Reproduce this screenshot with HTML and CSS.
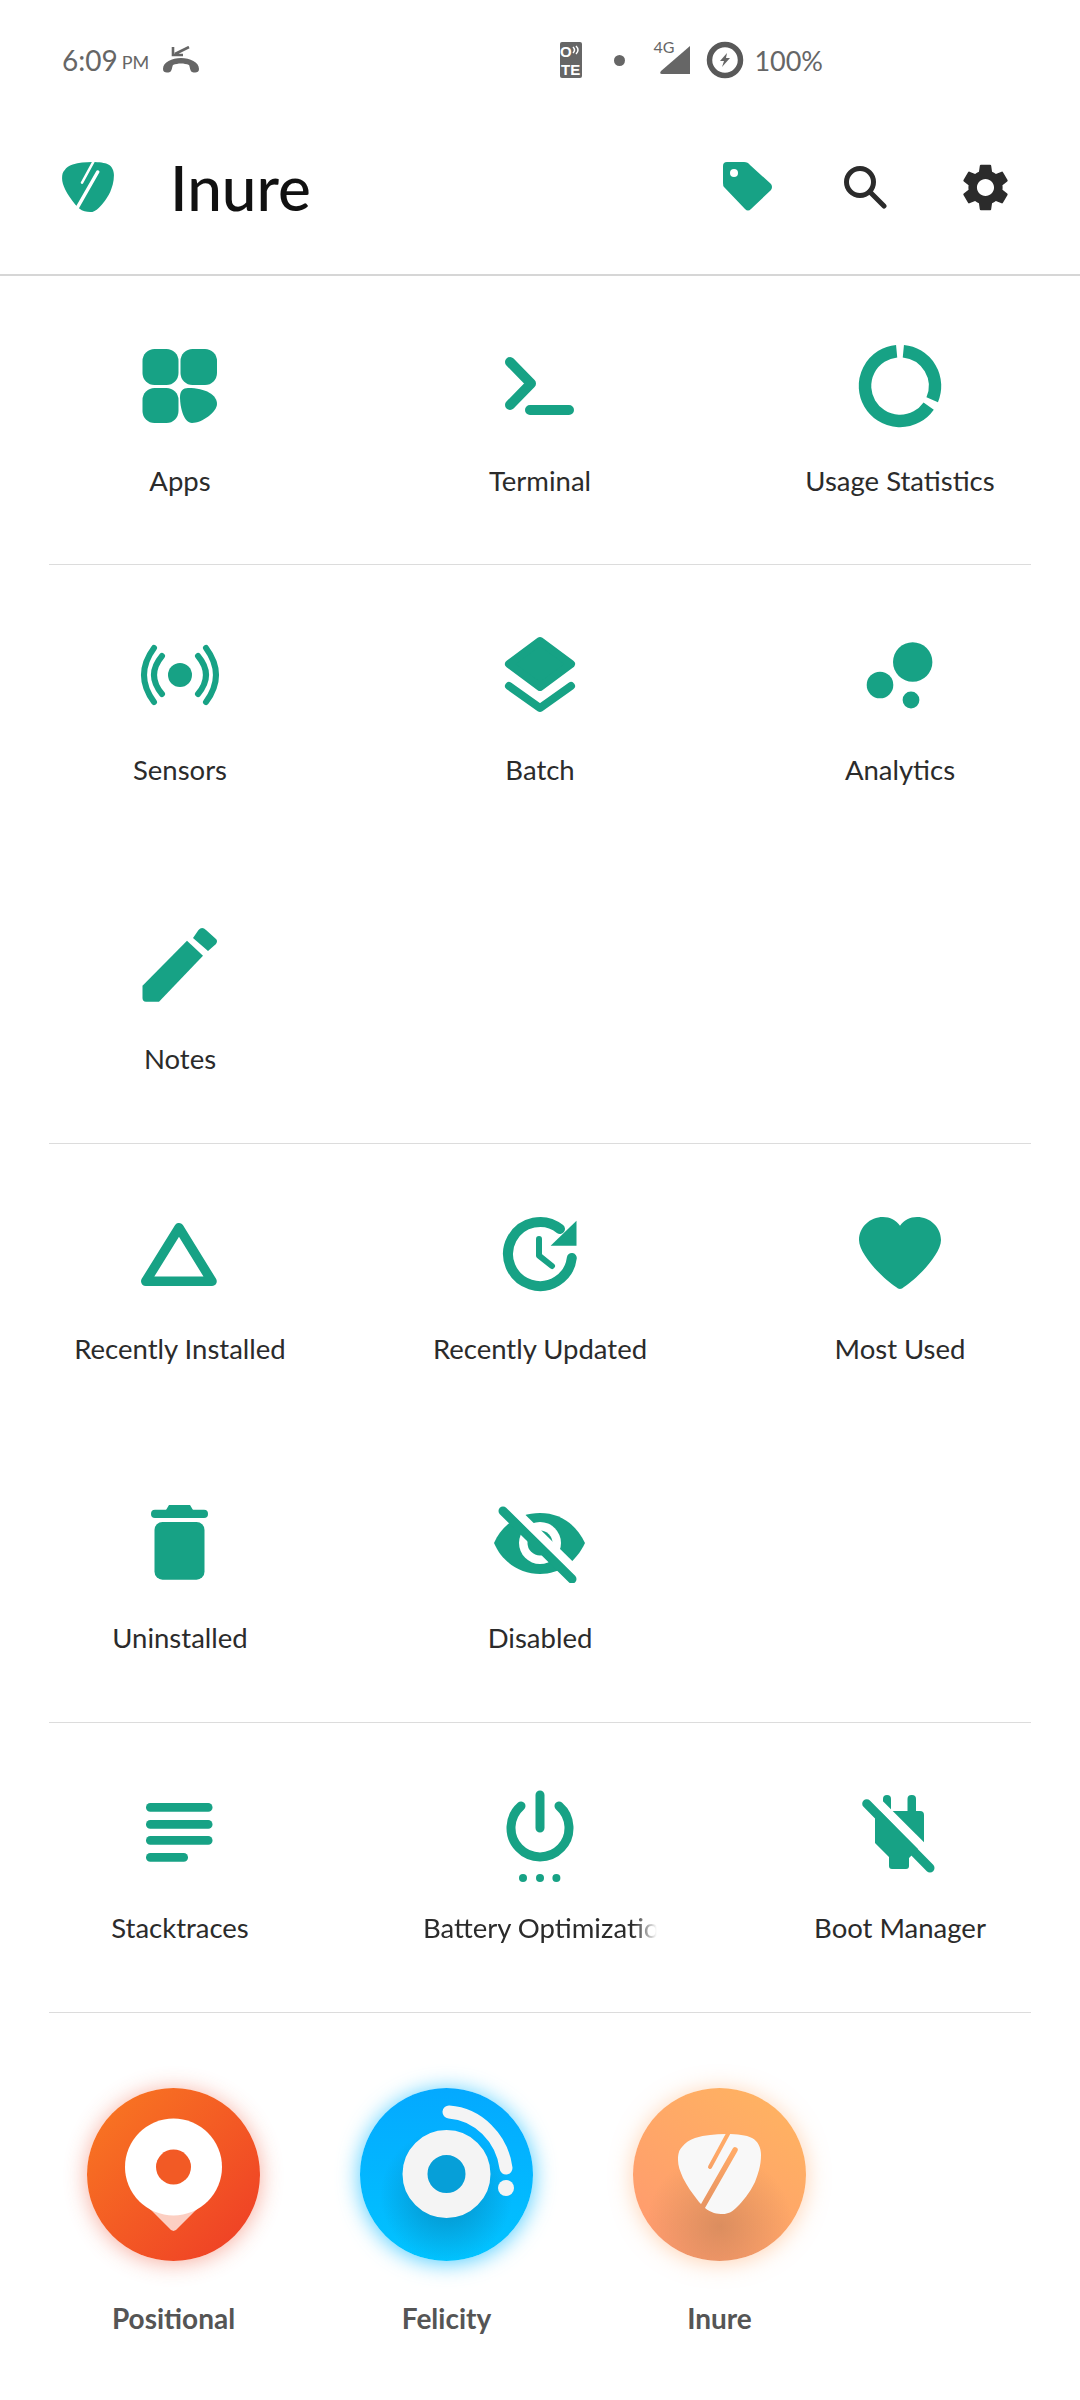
FILE: index.html
```html
<!DOCTYPE html>
<html lang="en">
  <head>
    <meta charset="UTF-8" />
    <meta name="viewport" content="width=device-width, initial-scale=1.0" />
    <title>Inure</title>
    <link rel="stylesheet" href="styles.css">
  </head>
  <body>
    <div class="status-bar">
      <div class="status-left">
        <span class="time">6:09</span><span class="ampm">PM</span>
        <svg class="call-icon" viewBox="0 0 38 28" width="38" height="28">
          <path d="M1 23 C1 16 10 12 19 12 C28 12 37 16 37 23 C37 27 33 27 30 26 C28 25 28 21 27 19 C22 17 16 17 11 19 C10 21 10 25 8 26 C5 27 1 27 1 23 Z" />
          <path d="M27 1 L13 8 M11 1 V9 H21" class="call-arrow" />
        </svg>
      </div>
      <div class="status-right">
        <svg class="lte-icon" viewBox="0 0 22 36" width="22" height="36">
          <rect width="22" height="36" rx="2" fill="#666" />
          <text x="0" y="15" class="lte-text">O</text>
          <path d="M13 5 Q16 8 13 11 M16 4 Q20 8 16 12" class="lte-waves" />
          <text x="1" y="33" class="lte-text">TE</text>
        </svg>
        <span class="status-dot"></span>
        <span class="signal">
          <span class="signal-label">4G</span>
          <svg viewBox="0 0 32 30" width="32" height="30"><path d="M31 1 V29 H3 Q0 29 2 26 Z" fill="#666" /></svg>
        </span>
        <svg viewBox="0 0 38 38" width="38" height="38">
          <circle cx="19" cy="19" r="15.5" class="battery-ring" />
          <path d="M21 12 L14 20 H18 L16 26 L24 17 H20 Z" fill="#666" />
        </svg>
        <span class="battery-text">100%</span>
      </div>
    </div>

    <header class="app-header">
      <svg class="logo" viewBox="45 46 83 80" width="52" height="50">
        <defs>
          <mask id="pick-cut" maskUnits="userSpaceOnUse" x="0" y="0" width="173" height="173">
            <path fill="#fff" d="M93 46 C105 46 113 47 119 50 C125 53 128 60 128 67 C128 78 125 86 122 94 C116 106 110 113 104 119 C99 124 95 126 90 126 C84 126 78 125 72 120 L66 114 C59 105 54 98 50 90 C47 83 45 78 45 72 C45 66 46 62 49 59 C52 55 56 52 62 50 C72 47 82 46 93 46 Z" />
            <path class="pick-slit" d="M96 44 L77 79" />
            <path class="pick-stripe" d="M102 62 L66 125" />
          </mask>
        </defs>
        <rect x="40" y="40" width="93" height="93" fill="#17a285" mask="url(#pick-cut)" />
      </svg>
      <h1 class="app-title">Inure</h1>
      <div class="header-actions">
        <svg viewBox="0 0 50 50" width="50" height="50">
          <path d="M4 0 H21 Q25 0 27 3 L48 22 Q50 25 48 28 L28 47 Q25 50 22 47 L1 25 Q0 24 0 21 V4 Q0 0 4 0 Z" fill="#17a285" />
          <circle cx="11" cy="11" r="4" fill="#fff" />
        </svg>
        <svg viewBox="0 0 44 44" width="44" height="44">
          <circle cx="17" cy="17" r="13.5" class="search-ring" />
          <path d="M27 27 L41 41" class="search-handle" />
        </svg>
        <svg viewBox="0 0 24 24" width="57" height="57">
          <path fill="#2b2b2b" d="M19.14 12.94c.04-.3.06-.61.06-.94 0-.32-.02-.64-.07-.94l2.03-1.58a.49.49 0 0 0 .12-.61l-1.92-3.32a.488.488 0 0 0-.59-.22l-2.39.96c-.5-.38-1.03-.7-1.62-.94l-.36-2.54a.484.484 0 0 0-.48-.41h-3.84c-.24 0-.43.17-.47.41l-.36 2.54c-.59.24-1.13.57-1.62.94l-2.39-.96c-.22-.08-.47 0-.59.22L2.74 8.87c-.12.21-.08.47.12.61l2.03 1.58c-.05.3-.09.63-.09.94s.02.64.07.94l-2.03 1.58a.49.49 0 0 0-.12.61l1.92 3.32c.12.22.37.29.59.22l2.39-.96c.5.38 1.03.7 1.62.94l.36 2.54c.05.24.24.41.48.41h3.84c.24 0 .44-.17.47-.41l.36-2.54c.59-.24 1.13-.56 1.62-.94l2.39.96c.22.08.47 0 .59-.22l1.92-3.32c.12-.22.07-.47-.12-.61l-2.01-1.58zM12 15.6c-1.98 0-3.6-1.62-3.6-3.6s1.62-3.6 3.6-3.6 3.6 1.62 3.6 3.6-1.62 3.6-3.6 3.6z" />
        </svg>
      </div>
    </header>

    <main>
      <section class="panel-grid panel-first">
        <div class="panel-item">
          <svg class="panel-icon" viewBox="0 0 80 80">
            <rect x="2.5" y="3" width="36" height="36" rx="12" />
            <rect x="40.5" y="3" width="36.5" height="36" rx="12" />
            <rect x="2.5" y="42" width="36" height="35" rx="12" />
            <path d="M40 51 C40 45 43 42 48 42 C66 42 77 49 77 58 C77 66 62 77 52 77 C44 77 40 62 40 51 Z" />
          </svg>
          <span class="panel-label">Apps</span>
        </div>
        <div class="panel-item">
          <svg class="panel-icon" viewBox="0 0 80 80">
            <path class="line-10" d="M10 16 L31 37.5 L10 59 M30 64 H69" />
          </svg>
          <span class="panel-label">Terminal</span>
        </div>
        <div class="panel-item">
          <svg class="panel-icon icon-large" viewBox="0 0 84 84">
            <path class="ring-arc" d="M45.35 7.16 A35 35 0 0 1 74.2 55.7 M70.67 62.08 A35 35 0 1 1 38.65 7.16" />
          </svg>
          <span class="panel-label">Usage Statistics</span>
        </div>
      </section>
      <hr class="divider" />

      <section class="panel-grid">
        <div class="panel-item">
          <svg class="panel-icon icon-wide" viewBox="0 0 100 80">
            <circle cx="50" cy="40" r="12" />
            <path class="line-6" d="M32 21 Q16 40 32 59 M68 21 Q84 40 68 59 M24 13 Q4 40 24 67 M76 13 Q96 40 76 67" />
          </svg>
          <span class="panel-label">Sensors</span>
        </div>
        <div class="panel-item">
          <svg class="panel-icon" viewBox="0 0 80 80">
            <path class="solid-round" d="M40 6 L71 29 L40 52 L9 29 Z" />
            <path class="line-8" d="M9 51 L40 73 L71 51" />
          </svg>
          <span class="panel-label">Batch</span>
        </div>
        <div class="panel-item">
          <svg class="panel-icon" viewBox="0 0 80 80">
            <circle cx="52.7" cy="27" r="19.7" />
            <circle cx="20" cy="50" r="13.3" />
            <circle cx="51" cy="65" r="8.4" />
          </svg>
          <span class="panel-label">Analytics</span>
        </div>
        <div class="panel-item">
          <svg class="panel-icon" viewBox="0 0 80 80">
            <path d="M2.5 61.7 L47 16.7 L63 31.7 L19 77.7 L6 77.7 Q2.5 77.7 2.5 74 Z" />
            <path d="M58.5 6 Q62 2 66 6 L76 15 Q78 17 76 20 L68 27 L53 14 Z" />
          </svg>
          <span class="panel-label">Notes</span>
        </div>
      </section>
      <hr class="divider" />

      <section class="panel-grid">
        <div class="panel-item">
          <svg class="panel-icon" viewBox="0 0 80 80">
            <path class="outline-round" d="M39 13.75 L72 67.3 H5.75 Z" />
          </svg>
          <span class="panel-label">Recently Installed</span>
        </div>
        <div class="panel-item">
          <svg class="panel-icon" viewBox="0 0 80 80">
            <path class="line-10" d="M71.8 44 A32 32 0 1 1 60 15" />
            <path d="M76.5 6.7 L50.6 31.7 H76.5 Z" />
            <path class="line-6" d="M39 25 V41.7 L52 52" />
          </svg>
          <span class="panel-label">Recently Updated</span>
        </div>
        <div class="panel-item">
          <svg class="panel-icon icon-large" viewBox="0 0 84 84">
            <path d="M42 13.7 C38 8 32 5 25 5 C12 5 1 15 1 28 C1 42 24 66 38 75 Q42 79 46 75 C60 66 83 42 83 28 C83 15 72 5 59 5 C52 5 46 8 42 13.7 Z" />
          </svg>
          <span class="panel-label">Most Used</span>
        </div>
        <div class="panel-item">
          <svg class="panel-icon" viewBox="0 0 80 80">
            <rect x="11" y="6.7" width="57" height="8.3" rx="4" />
            <path d="M26 7 L29 2 H50 L53 7 Z" />
            <rect x="14.5" y="19" width="50" height="57.7" rx="8" />
          </svg>
          <span class="panel-label">Uninstalled</span>
        </div>
        <div class="panel-item">
          <svg class="panel-icon icon-wide" viewBox="0 0 100 80">
            <path d="M4 40 C12 21 30 10 50 10 C70 10 86 21 95 40 C86 59 70 71 50 71 C30 71 12 59 4 40 Z" />
            <circle cx="50" cy="40" r="21" fill="#fff" />
            <circle cx="50" cy="40" r="12.5" />
            <path class="cut-white" d="M19 2 L88 70" />
            <path class="line-9" d="M13 8 L82 76" />
          </svg>
          <span class="panel-label">Disabled</span>
        </div>
      </section>
      <hr class="divider" />

      <section class="panel-grid">
        <div class="panel-item">
          <svg class="panel-icon" viewBox="0 0 80 80">
            <rect x="6" y="10" width="66.5" height="8.7" rx="4.3" />
            <rect x="6" y="27" width="66.5" height="8.7" rx="4.3" />
            <rect x="6" y="43" width="66.5" height="8.7" rx="4.3" />
            <rect x="6" y="60" width="42" height="8.7" rx="4.3" />
          </svg>
          <span class="panel-label">Stacktraces</span>
        </div>
        <div class="panel-item">
          <svg class="panel-icon icon-tall" viewBox="0 0 80 100">
            <path class="line-9" d="M40 12 V45 M21 23 A29 29 0 1 0 59 23" />
            <circle cx="23" cy="95" r="4" />
            <circle cx="40" cy="95" r="4" />
            <circle cx="56.4" cy="95" r="4" />
          </svg>
          <span class="panel-label label-fade">Battery Optimization</span>
        </div>
        <div class="panel-item">
          <svg class="panel-icon" viewBox="0 0 80 80">
            <rect x="23" y="2" width="8" height="22" rx="4" />
            <rect x="47.5" y="2" width="8.5" height="22" rx="4" />
            <path d="M15 18 H60 Q64 18 64 22 V50 L49 65 V73 Q49 76 46 76 H32 Q29 76 29 73 V64 L15 50 Z" />
            <path class="cut-white" d="M14 5.7 L84 75.7" />
            <path class="line-9" d="M6.7 10.7 L70 75" />
          </svg>
          <span class="panel-label">Boot Manager</span>
        </div>
      </section>
      <hr class="divider" />

      <section class="app-row">
        <div class="app-card">
          <div class="app-bubble bubble-positional">
            <svg viewBox="0 0 173 173" width="173" height="173">
              <path d="M57 115 L82 140 Q86.5 146 91 140 L116 115 Z" fill="#fff" fill-opacity="0.72" />
              <circle cx="86.5" cy="79" r="48.5" fill="#fff" />
              <circle cx="86.5" cy="79" r="17.5" fill="#f25a25" />
            </svg>
          </div>
          <span class="app-name">Positional</span>
        </div>
        <div class="app-card">
          <div class="app-bubble bubble-felicity">
            <svg viewBox="0 0 173 173" width="173" height="173">
              <circle class="felicity-ring" cx="86.5" cy="86" r="31.5" />
              <path class="felicity-arc" d="M89 24 C118 26 142 50 146 80" />
              <circle cx="146" cy="100" r="8" fill="#f4f4f4" />
            </svg>
          </div>
          <span class="app-name">Felicity</span>
        </div>
        <div class="app-card">
          <div class="app-bubble bubble-inure">
            <svg viewBox="0 0 173 173" width="173" height="173">
              <rect x="40" y="40" width="93" height="93" fill="#f8f8f8" mask="url(#pick-cut)" />
            </svg>
          </div>
          <span class="app-name">Inure</span>
        </div>
      </section>
    </main>
  </body>
</html>
```

FILE: styles.css
```css
body {
  margin: 0;
  padding: 0;
  background-color: #fff;
  font-family: "Lato", "Noto Sans", sans-serif;
  color: #2b2b2b;
}

.status-bar {
  display: flex;
  justify-content: space-between;
  align-items: center;
  height: 120px;
  padding: 0 257px 0 62px;
  box-sizing: border-box;
  color: #666;
}
.status-left,
.status-right {
  display: flex;
  align-items: center;
}
.time {
  font-size: 28px;
}
.ampm {
  font-size: 18px;
  margin: 4px 13px 0 4px;
}
.call-icon path {
  fill: #666;
}
.call-icon .call-arrow {
  fill: none;
  stroke: #666;
  stroke-width: 2.6;
}
.lte-text {
  fill: #fff;
  font-family: "Liberation Sans", sans-serif;
  font-size: 15px;
  font-weight: 700;
}
.lte-waves {
  fill: none;
  stroke: #fff;
  stroke-width: 1.5;
}
.status-dot {
  width: 11px;
  height: 11px;
  border-radius: 50%;
  background-color: #666;
  margin: 0 34px 0 32px;
}
.signal {
  position: relative;
  display: flex;
  margin-right: 15px;
}
.signal-label {
  position: absolute;
  left: -6px;
  top: -8px;
  font-size: 16px;
}
.battery-ring {
  fill: none;
  stroke: #595959;
  stroke-width: 5.5;
}
.battery-text {
  font-size: 27px;
  margin-left: 10px;
}

.app-header {
  display: flex;
  align-items: center;
  height: 156px;
  padding: 0 66px 20px 62px;
  border-bottom: 2px solid #d6d6d6;
  box-sizing: border-box;
}
.logo {
  margin-right: 56px;
}
.pick-slit,
.pick-stripe {
  fill: none;
  stroke: #000;
}
.pick-slit {
  stroke-width: 4;
  stroke-linecap: round;
}
.pick-stripe {
  stroke-width: 5.5;
  stroke-linecap: round;
}
.app-title {
  font-size: 62px;
  font-weight: 500;
  margin: 0;
  color: #111;
}
.header-actions {
  display: flex;
  align-items: center;
  gap: 70px;
  margin-left: auto;
}
.search-ring,
.search-handle {
  fill: none;
  stroke: #2b2b2b;
  stroke-width: 5;
  stroke-linecap: round;
}

.panel-grid {
  display: grid;
  grid-template-columns: repeat(3, 360px);
  grid-auto-rows: 289px;
}
.panel-first {
  grid-auto-rows: 288px;
}
.panel-item {
  display: flex;
  flex-direction: column;
  align-items: center;
  padding-top: 70px;
  box-sizing: border-box;
  min-width: 0;
}
.panel-icon {
  width: 80px;
  height: 80px;
  fill: #17a285;
  flex: none;
}
.icon-large {
  width: 84px;
  height: 84px;
  margin: -2px;
}
.icon-wide {
  width: 100px;
}
.icon-tall {
  height: 100px;
  margin: -10px 0;
}
.panel-label {
  margin-top: 38px;
  font-size: 27.5px;
  line-height: 34px;
  white-space: nowrap;
}
.label-fade {
  width: 234px;
  overflow: hidden;
  -webkit-mask-image: linear-gradient(to right, #000 90%, transparent);
  mask-image: linear-gradient(to right, #000 90%, transparent);
}

.line-6,
.line-8,
.line-9,
.line-10 {
  fill: none;
  stroke: #17a285;
  stroke-linecap: round;
  stroke-linejoin: round;
}
.line-6 {
  stroke-width: 6;
}
.line-8 {
  stroke-width: 8;
}
.line-9 {
  stroke-width: 9;
}
.line-10 {
  stroke-width: 10;
}
.ring-arc {
  fill: none;
  stroke: #17a285;
  stroke-width: 12.5;
}
.solid-round {
  stroke: #17a285;
  stroke-width: 8;
  stroke-linejoin: round;
}
.outline-round {
  fill: none;
  stroke: #17a285;
  stroke-width: 9.5;
  stroke-linejoin: round;
}
.cut-white {
  fill: none;
  stroke: #fff;
  stroke-width: 9;
}

.divider {
  height: 1px;
  margin: 0 49px;
  border: none;
  background-color: #dcdcdc;
}

.app-row {
  display: flex;
  gap: 100px;
  padding: 75px 0 0 87px;
}
.app-card {
  display: flex;
  flex-direction: column;
  align-items: center;
  width: 173px;
}
.app-bubble {
  width: 173px;
  height: 173px;
  border-radius: 50%;
  overflow: hidden;
}
.app-bubble svg {
  display: block;
}
.bubble-positional {
  background: linear-gradient(135deg, #f97a22, #ee3b26);
  box-shadow: 0 2px 22px rgba(238, 70, 38, 0.45);
}
.bubble-felicity {
  background: radial-gradient(circle at 50% 62%, #0690c4 0, rgba(6, 144, 196, 0) 48%), linear-gradient(180deg, #04a9ff, #01c3ff);
  box-shadow: 0 2px 22px rgba(2, 182, 255, 0.7);
}
.bubble-inure {
  background: radial-gradient(circle at 50% 80%, rgba(190, 125, 85, 0.55) 0, rgba(190, 125, 85, 0) 45%), linear-gradient(215deg, #ffb560, #ff9870);
  box-shadow: 0 2px 22px rgba(255, 165, 100, 0.5);
}
.felicity-ring {
  fill: #069fd8;
  stroke: #f4f4f4;
  stroke-width: 25;
}
.felicity-arc {
  fill: none;
  stroke: #f4f4f4;
  stroke-width: 13;
  stroke-linecap: round;
}
.app-name {
  margin-top: 40px;
  font-size: 28px;
  line-height: 34px;
  font-weight: 700;
  color: #555;
}
```
